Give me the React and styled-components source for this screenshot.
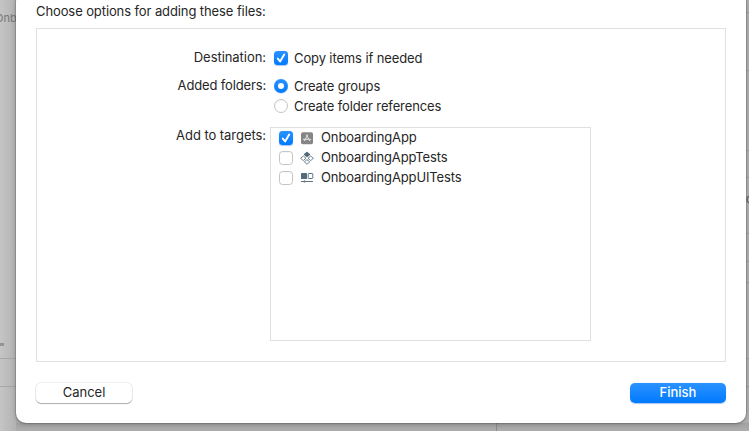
import React from "react";
import styled, { createGlobalStyle } from "styled-components";

const GlobalStyle = createGlobalStyle`
  * { box-sizing: border-box; }
  body {
    margin: 0;
    overflow: hidden;
    font-family: Inter, "Liberation Sans", sans-serif;
    font-size: 13px;
    line-height: 20px;
    color: #262626;
  }
`;

const Screen = styled.main`
  position: relative;
  width: 749px;
  height: 431px;
  overflow: hidden;
  background: #b1b1b1;
`;

const Backdrop = styled.div`
  display: grid;
  grid-template-columns: 16px 481px 1fr;
  height: 431px;
`;

const Navigator = styled.div`
  overflow: hidden;
  background: linear-gradient(90deg, #c5c5c5, #b2b2b2);
`;

const FileName = styled.div`
  height: 338px;
  padding-top: 8px;
  margin-left: -5px;
  font-size: 11px;
  white-space: nowrap;
  color: #777;
`;

const Dash = styled.div`
  width: 4px;
  height: 3px;
  margin-top: 5px;
  background: #939393;
`;

const NavRule = styled.div`
  height: ${(p) => p.$height}px;
  border-bottom: 1px solid #a5a5a5;
`;

const Editor = styled.div`
  background: linear-gradient(#aaa 423px, #a1a1a1 423px, #adadad);
  border-right: 1px solid #8b8b8b;
`;

const Inspector = styled.div`
  display: flex;
  flex-direction: column;
  align-items: flex-end;
  background: linear-gradient(#b1b1b1 423px, #a1a1a1 423px, #adadad);
`;

const InspectorRow = styled.div`
  width: 3px;
  height: ${(p) => p.$height}px;
  flex: none;
  overflow: hidden;
  border-bottom: 1px solid #9c9c9c;
`;

const EdgeText = styled.div`
  padding-top: 11px;
  font-size: 11px;
  color: #555;
`;

const Sheet = styled.section`
  position: absolute;
  left: 16px;
  top: -8px;
  width: 730px;
  height: 431px;
  padding: 9px 20px 0;
  border-radius: 10px;
  background: #fff;
  box-shadow: 0 0 0 1px rgba(0, 0, 0, 0.12), 0 1px 4px rgba(0, 0, 0, 0.25);
`;

const Title = styled.div`
  height: 27px;
`;

const Text = styled.span`
  display: block;
  white-space: nowrap;
  letter-spacing: ${(p) => p.$tracking ?? -0.1}px;
`;

const Options = styled.div`
  display: grid;
  grid-template-columns: 229px 1fr;
  grid-template-rows: 28px 51px 214px;
  column-gap: 4px;
  height: 334px;
  padding-top: 19px;
  border: 1px solid #e0e0e0;
`;

const Label = styled.div`
  display: flex;
  justify-content: flex-end;
  align-items: flex-start;
  margin-top: ${(p) => p.$offset ?? -1}px;
`;

const Choices = styled.div`
  padding-left: 4px;
`;

const Choice = styled.label`
  display: flex;
  align-items: center;
  height: 20px;
  gap: 6px;
`;

const ToggleBox = styled.span`
  display: flex;
  align-items: center;
  justify-content: center;
  flex: none;
  width: 14px;
  height: 14px;
  border-radius: ${(p) => (p.$round ? "50%" : "3.5px")};
  border: ${(p) => (p.$on ? "0" : "1px solid #c4c4c4")};
  background: ${(p) => (p.$on ? "linear-gradient(#2b92ff, #007aff)" : "#fff")};
  box-shadow: ${(p) => (p.$on ? "0 0.5px 1px rgba(0, 90, 220, 0.35)" : "inset 0 1px 1px rgba(0,0,0,.04)")};
`;

const RadioDot = styled.span`
  width: 6px;
  height: 6px;
  border-radius: 50%;
  background: #fff;
`;

const Targets = styled.div`
  width: 321px;
  height: 214px;
  border: 1px solid #e0e0e0;
`;

const TargetRow = styled.label`
  display: grid;
  grid-template-columns: 14px 14px 1fr;
  grid-template-rows: 20px;
  column-gap: 7px;
  align-items: center;
  height: 20px;
  padding-left: 8px;

  svg { display: block; }
`;

const TargetName = styled(Text)`
  padding-bottom: 2px;
`;

const Footer = styled.footer`
  display: flex;
  justify-content: space-between;
  padding-top: 21px;
`;

const Button = styled.button`
  display: flex;
  align-items: center;
  justify-content: center;
  width: 96px;
  height: 20px;
  padding: 0 0 2px;
  border: 0;
  border-radius: 5px;
  font: inherit;
  font-weight: ${(p) => (p.$primary ? 500 : 400)};
  color: ${(p) => (p.$primary ? "#fff" : "#262626")};
  background: ${(p) => (p.$primary ? "linear-gradient(#2b92ff, #007aff)" : "#fff")};
  box-shadow: ${(p) =>
    p.$primary
      ? "0 0.5px 1px rgba(0, 90, 220, 0.35)"
      : "0 0 0 0.5px rgba(0, 0, 0, 0.13), 0 1px 1px rgba(0, 0, 0, 0.28)"};
`;

function Checkbox({ on }) {
  return (
    <ToggleBox $on={on}>
      {on && (
        <svg width="14" height="14" viewBox="0 0 14 14">
          <path d="M3.8 7.6 6.1 10.4 10.2 3.6" fill="none" stroke="#fff" strokeWidth="1.9" strokeLinecap="round" strokeLinejoin="round" />
        </svg>
      )}
    </ToggleBox>
  );
}

function Radio({ on }) {
  return <ToggleBox $round $on={on}>{on && <RadioDot />}</ToggleBox>;
}

function AppIcon() {
  return (
    <svg width="14" height="14" viewBox="0 0 14 14">
      <rect x="1" y="1.3" width="12" height="12" rx="1.8" fill="#858585" />
      <path d="M7.5 4 4.5 9.8M6.5 4 9.7 9.8M3.4 8.3h4.4M9.1 8.3h1.6" fill="none" stroke="#e6e6e6" strokeWidth="1" strokeLinecap="round" />
    </svg>
  );
}

function TestsIcon() {
  return (
    <svg width="14" height="14" viewBox="0 0 14 14" fill="none" stroke="#738592" strokeWidth="1" strokeLinejoin="round">
      <path d="M7 1.5 9.4 3.5 7 5.5 4.6 3.5Z" fill="#526b7c" stroke="#526b7c" strokeWidth="1.5" />
      <path d="M3.3 5 6 7.3 3.3 9.6 0.6 7.3Z" />
      <path d="M10.7 5 13.4 7.3 10.7 9.6 8 7.3Z" />
      <path d="M7 8.6 9.7 10.9 7 13.2 4.3 10.9Z" />
    </svg>
  );
}

function UITestsIcon() {
  return (
    <svg width="14" height="14" viewBox="0 0 14 14" fill="none" stroke="#5f7584">
      <rect x="1" y="2" width="6" height="6" rx="0.6" fill="#526b7c" stroke="none" />
      <rect x="8.2" y="2.5" width="4.6" height="5" rx="0.6" />
      <path d="M1 10.5h12" />
      <path d="M4.5 9.5v2" strokeWidth="1.5" />
    </svg>
  );
}

const targets = [
  { name: "OnboardingApp", on: true, Icon: AppIcon, tracking: -0.12 },
  { name: "OnboardingAppTests", on: false, Icon: TestsIcon, tracking: -0.14 },
  { name: "OnboardingAppUITests", on: false, Icon: UITestsIcon, tracking: -0.13 },
];

export default function App() {
  return (
    <Screen>
      <GlobalStyle />
      <Backdrop>
        <Navigator>
          <FileName>Onb</FileName>
          <Dash />
          <NavRule $height={13} />
          <NavRule $height={28} />
        </Navigator>
        <Editor />
        <Inspector>
          {[13, 58, 80].map((h) => <InspectorRow key={h} $height={h} />)}
          <InspectorRow $height={27} />
          <InspectorRow $height={56}><EdgeText>c</EdgeText></InspectorRow>
          <InspectorRow $height={28} />
          <InspectorRow $height={21} />
          <InspectorRow $height={76} />
          <InspectorRow $height={28} />
        </Inspector>
      </Backdrop>
      <Sheet>
        <Title><Text>Choose options for adding these files:</Text></Title>
        <Options>
          <Label><Text $tracking={-0.05}>Destination:</Text></Label>
          <Choices>
            <Choice><Checkbox on /><Text $tracking={-0.12}>Copy items if needed</Text></Choice>
          </Choices>
          <Label><Text $tracking={-0.15}>Added folders:</Text></Label>
          <Choices>
            <Choice><Radio on /><Text>Create groups</Text></Choice>
            <Choice><Radio /><Text $tracking={-0.12}>Create folder references</Text></Choice>
          </Choices>
          <Label $offset={-2}><Text $tracking={-0.05}>Add to targets:</Text></Label>
          <Targets>
            {targets.map(({ name, on, Icon, tracking }) => (
              <TargetRow key={name}>
                <Checkbox on={on} /><Icon /><TargetName $tracking={tracking}>{name}</TargetName>
              </TargetRow>
            ))}
          </Targets>
        </Options>
        <Footer>
          <Button>Cancel</Button>
          <Button $primary>Finish</Button>
        </Footer>
      </Sheet>
    </Screen>
  );
}
